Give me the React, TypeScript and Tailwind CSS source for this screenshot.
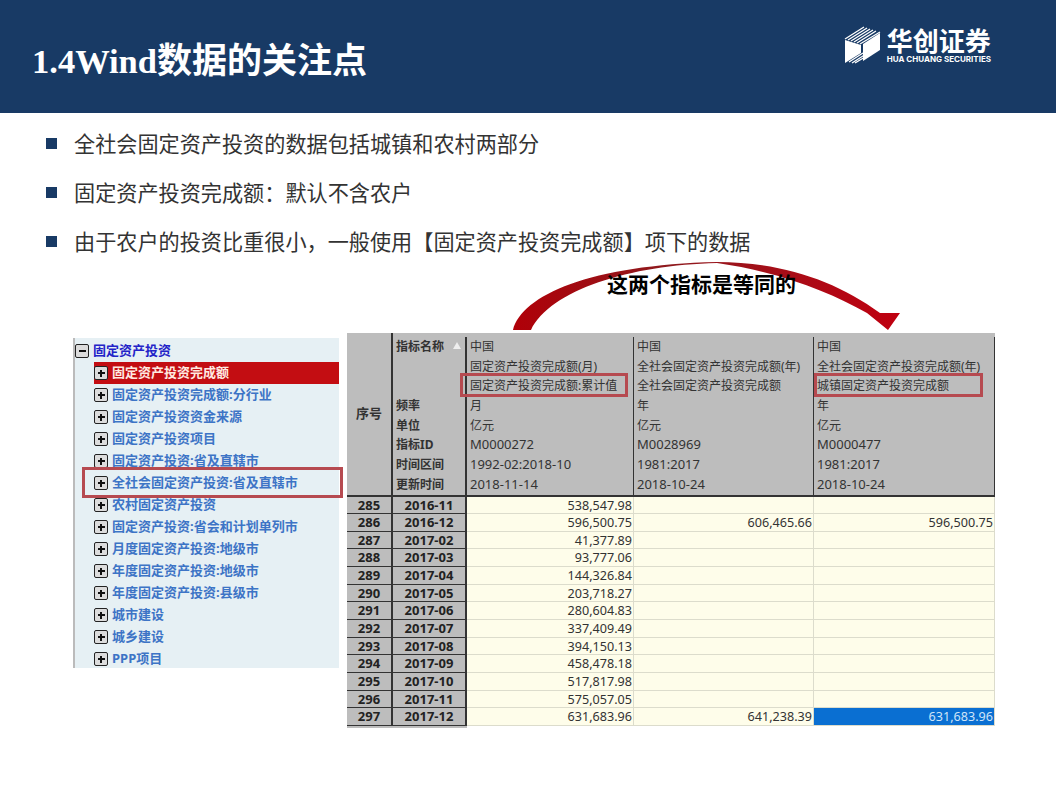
const cjk = '"Noto Sans CJK SC"';

const bullets = [
  "全社会固定资产投资的数据包括城镇和农村两部分",
  "固定资产投资完成额：默认不含农户",
  "由于农户的投资比重很小，一般使用【固定资产投资完成额】项下的数据",
];

const treeItems = [
  "固定资产投资完成额",
  "固定资产投资完成额:分行业",
  "固定资产投资资金来源",
  "固定资产投资项目",
  "固定资产投资:省及直辖市",
  "全社会固定资产投资:省及直辖市",
  "农村固定资产投资",
  "固定资产投资:省会和计划单列市",
  "月度固定资产投资:地级市",
  "年度固定资产投资:地级市",
  "年度固定资产投资:县级市",
  "城市建设",
  "城乡建设",
  "PPP项目",
];

const headerRows = [
  ["指标名称", "中国", "中国", "中国"],
  ["", "固定资产投资完成额(月)", "全社会固定资产投资完成额(年)", "全社会固定资产投资完成额(年)"],
  ["", "固定资产投资完成额:累计值", "全社会固定资产投资完成额", "城镇固定资产投资完成额"],
  ["频率", "月", "年", "年"],
  ["单位", "亿元", "亿元", "亿元"],
  ["指标ID", "M0000272", "M0028969", "M0000477"],
  ["时间区间", "1992-02:2018-10", "1981:2017", "1981:2017"],
  ["更新时间", "2018-11-14", "2018-10-24", "2018-10-24"],
];

const dataRows = [
  ["285", "2016-11", "538,547.98", "", ""],
  ["286", "2016-12", "596,500.75", "606,465.66", "596,500.75"],
  ["287", "2017-02", "41,377.89", "", ""],
  ["288", "2017-03", "93,777.06", "", ""],
  ["289", "2017-04", "144,326.84", "", ""],
  ["290", "2017-05", "203,718.27", "", ""],
  ["291", "2017-06", "280,604.83", "", ""],
  ["292", "2017-07", "337,409.49", "", ""],
  ["293", "2017-08", "394,150.13", "", ""],
  ["294", "2017-09", "458,478.18", "", ""],
  ["295", "2017-10", "517,817.98", "", ""],
  ["296", "2017-11", "575,057.05", "", ""],
  ["297", "2017-12", "631,683.96", "641,238.39", "631,683.96"],
];

function Logo() {
  return (
    <svg width="38" height="38" viewBox="0 0 38 38" className="shrink-0">
      <path d="M1 13 L20 1 M4 14 L23 2 M7 15 L26 3 M10 16 L29 4 M13 17 L32 5 M16 18 L36 6" stroke="#fff" strokeWidth="1.3" />
      <path d="M1 14 L17 19 V27 L1 37 Z" fill="#fff" />
      <path d="M19 18 L36 7 V24 L19 35 Z" fill="#fff" />
      <path d="M5 36 L19 27 M8 37 L22 28 M11 37 L26 28" stroke="#fff" strokeWidth="1.3" />
    </svg>
  );
}

function PlusBox({ minus }: { minus?: boolean }) {
  return (
    <span className="w-[14px] h-[14px] shrink-0 rounded-[2px] border-[1.5px] border-[#222] bg-[#dcdcdc] flex items-center justify-center relative">
      <span className="w-[7px] h-[2px] bg-[#111]" />
      {!minus && <span className="absolute w-[2px] h-[7px] bg-[#111]" />}
    </span>
  );
}

export default function App() {
  return (
    <div className="w-[1056px] h-[792px] bg-white relative overflow-hidden" style={{ fontFamily: `"Noto Sans", ${cjk}, sans-serif` }}>
      <header className="h-[113px] bg-[#183a65] flex items-start justify-between pl-[32px] pr-[65px]">
        <h1 className="mt-[38px] text-[35px] leading-[46px] font-bold text-white" style={{ fontFamily: `"Liberation Serif", ${cjk}, serif` }}>
          <span className="text-[34.5px]">1.4Wind</span>数据的关注点
        </h1>
        <div className="flex items-center gap-[5px] mt-[26px]">
          <Logo />
          <div className="flex flex-col text-white">
            <span className="text-[26px] leading-[28px] font-bold">华创证券</span>
            <span className="text-[8px] leading-[9px] font-bold whitespace-nowrap" style={{ fontFamily: "Inter, sans-serif" }}>
              HUA CHUANG SECURITIES
            </span>
          </div>
        </div>
      </header>

      <ul className="pt-[6px] pl-[46px] flex flex-col">
        {bullets.map((b) => (
          <li key={b} className="h-[49px] flex items-center gap-[17px] text-[21.15px] text-[#333]">
            <span className="w-[11px] h-[11px] bg-[#183a65]" />
            {b}
          </li>
        ))}
      </ul>

      <div className="pl-[73px] pt-[67px] flex items-start gap-[8px]">
        {/* tree */}
        <div className="w-[266px] h-[330px] mt-[5px] bg-[#e6f0f4] border-l-2 border-[#bbb] pt-[1px]">
          <div className="h-[23px] flex items-center gap-[4px] text-[13px] font-bold text-[#2323c8]">
            <PlusBox minus />
            固定资产投资
          </div>
          {treeItems.map((t, i) => (
            <div key={t} className={`h-[22px] ml-[19px] flex items-center gap-[4px] text-[13px] font-bold ${i === 0 ? "bg-[#c30d12] text-[#ffe9e0]" : "text-[#3d74c6]"}`}>
              <PlusBox />
              {t}
            </div>
          ))}
        </div>

        {/* table */}
        <div className="w-[648px] text-[#333]">
          <div className="bg-[#bdbdbd] grid grid-cols-[46px_74px_167px_180px_181px] border-b-2 border-[#333]">
            <div className="row-span-8 border-r-2 border-[#333] flex items-center justify-center font-bold text-[13px]">序号</div>
            {headerRows.map((row, i) =>
              row.map((cell, j) => (
                <div
                  key={`${i}-${j}`}
                  className={`h-[19.7px] leading-[19.7px] pl-[3px] whitespace-nowrap border-r border-[#333] flex justify-between pr-[4px] ${/^[\dM]/.test(cell) ? "text-[13px]" : "text-[12px]"} ${j === 0 ? "font-bold border-r-2" : ""} ${i === 0 ? "mt-[4px]" : ""}`}
                >
                  {cell}
                  {i === 0 && j === 0 && <span className="mt-[5px] w-0 h-0 border-x-[4px] border-x-transparent border-b-[7px] border-b-[#eee]" />}
                </div>
              ))
            )}
          </div>
          {dataRows.map((row) => (
            <div key={row[0]} className="grid grid-cols-[46px_74px_167px_180px_181px] grid-rows-[17.67px] text-[12.6px] leading-[17px]">
              <div className="bg-[#bdbdbd] border-r-2 border-b border-[#333] text-center font-bold text-[13px] text-[#222] overflow-hidden">{row[0]}</div>
              <div className="bg-[#bdbdbd] border-r-2 border-b border-[#333] text-center font-bold text-[13px] text-[#222] overflow-hidden">{row[1]}</div>
              {row.slice(2).map((v, k) => (
                <div key={k} className={`text-right pr-[1px] border-r border-b border-[#dcdccc] overflow-hidden ${row[0] === "297" && k === 2 ? "bg-[#0a6fd2] text-[#cfe4f8]" : "bg-[#fefdea]"}`}>
                  {v}
                </div>
              ))}
            </div>
          ))}
          <div className="h-[2px] w-[120px] bg-[#bdbdbd]" />
        </div>
      </div>

      {/* red call-outs */}
      <div className="absolute left-[82px] top-[467px] w-[261px] h-[31px] border-[3px] border-[#b64a50]" />
      <div className="absolute left-[460px] top-[373px] w-[168px] h-[24px] border-[3px] border-[#b64a50]" />
      <div className="absolute left-[814px] top-[373px] w-[169px] h-[24px] border-[3px] border-[#b64a50]" />

      {/* curved arrow */}
      <svg className="absolute left-[500px] top-[255px]" width="410" height="85" viewBox="0 0 410 85">
        <defs>
          <linearGradient id="arc" x1="0" x2="1" y1="0" y2="0">
            <stop offset="0" stopColor="#b00008" />
            <stop offset="0.4" stopColor="#8e1a1e" />
            <stop offset="1" stopColor="#c00010" />
          </linearGradient>
        </defs>
        <path d="M13 75 C 22 40, 90 10, 217 7 C 280 7, 335 25, 380 58 L 400 58 L 388 75 L 367 58 C 330 37, 280 17, 217 8 C 130 10, 50 35, 31 75 Z" fill="url(#arc)" />
      </svg>
      <div className="absolute left-[607px] top-[269px] text-[21px] leading-[30px] font-bold text-black">这两个指标是等同的</div>
    </div>
  );
}
